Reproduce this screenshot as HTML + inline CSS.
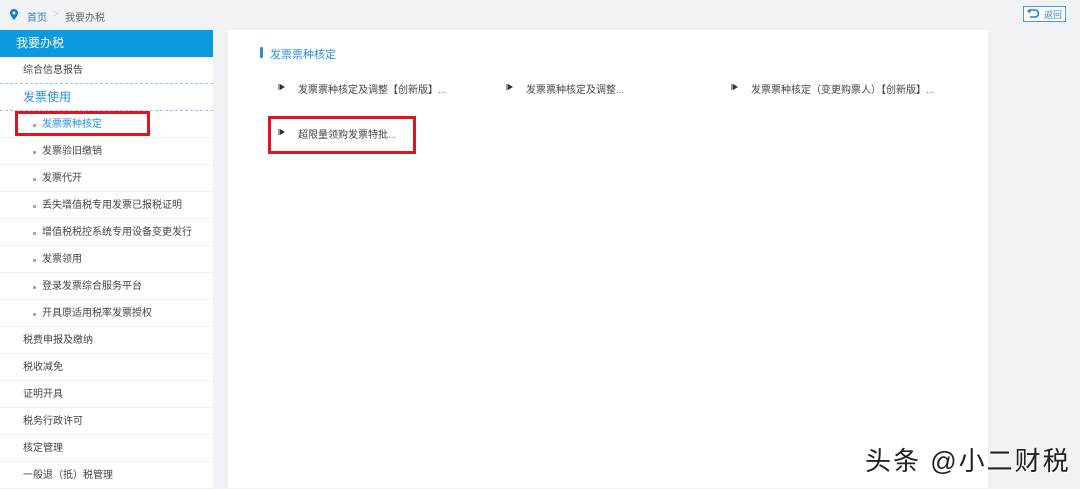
<!DOCTYPE html>
<html><head><meta charset="utf-8"><style>
*{margin:0;padding:0;box-sizing:border-box}
body{width:1080px;height:488px;background:#f0f2f5;font-family:"Liberation Sans","Noto Sans CJK SC",sans-serif;position:relative;overflow:hidden;color:#444}
.a{position:absolute;white-space:nowrap}
.side{position:absolute;left:0;top:30px;width:213px;height:458px;background:#fff}
.hd{height:27px;background:#0b99e0;color:#fff;font-size:12px;line-height:27px;padding-left:16px}
.it{height:27px;line-height:27px;font-size:10px;padding-left:23px;border-bottom:1px solid #f0f0f0}
.sub{padding-left:42px;position:relative}
.sub:before{content:"";position:absolute;left:33px;top:13px;width:3px;height:3px;background:#aaa}
.panel{position:absolute;left:228px;top:30px;width:760px;height:458px;background:#fff}
.lk{position:absolute;font-size:10px;color:#444;white-space:nowrap}
.lk:before{content:"";position:absolute;left:-18px;top:3px;border-left:5px solid #333;border-top:3px solid transparent;border-bottom:3px solid transparent}
.lk:after{content:"";position:absolute;left:-20px;top:3px;width:2px;height:6px;background:#999}
.red{position:absolute;border:3px solid #e0141e}
</style></head><body>
<svg class="a" style="left:10px;top:9px" width="8" height="11" viewBox="0 0 8 11"><path d="M4 0C1.8 0 0 1.7 0 3.9 0 6.6 4 11 4 11s4-4.4 4-7.1C8 1.7 6.2 0 4 0z" fill="#0b7fd0"/><circle cx="4" cy="4" r="1.5" fill="#fff"/></svg>
<div class="a" style="left:27px;top:9px;font-size:10px;color:#2a7fd0">首页</div>
<div class="a" style="left:53px;top:9px;font-size:10px;color:#ccc">&gt;</div>
<div class="a" style="left:65px;top:9px;font-size:10px;color:#666">我要办税</div>
<div class="a" style="left:1023px;top:6px;width:43px;height:16px;border:1px solid #4a9ad8;background:#fff"></div>
<svg class="a" style="left:1027px;top:9px" width="12" height="10" viewBox="0 0 12 10"><path d="M3 1H8a3.5 3.5 0 0 1 0 7H3" fill="none" stroke="#1a7fd0" stroke-width="1.6"/><path d="M0 1L3.5 -1.5V3.5z" fill="#1a7fd0" transform="translate(0,1)"/></svg>
<div class="a" style="left:1044px;top:8px;font-size:9px;color:#2a7fd0">返回</div>
<div class="side">
<div class="hd">我要办税</div>
<div class="it" style="border-bottom:1px dashed #9cc7e8">综合信息报告</div>
<div class="it" style="font-size:12px;color:#2a8fe0;border-bottom:1px dashed #9cc7e8">发票使用</div>
<div class="it sub" style="color:#2a8fe0">发票票种核定</div>
<div class="it sub">发票验旧缴销</div>
<div class="it sub">发票代开</div>
<div class="it sub">丢失增值税专用发票已报税证明</div>
<div class="it sub">增值税税控系统专用设备变更发行</div>
<div class="it sub">发票领用</div>
<div class="it sub">登录发票综合服务平台</div>
<div class="it sub">开具原适用税率发票授权</div>
<div class="it">税费申报及缴纳</div>
<div class="it">税收减免</div>
<div class="it">证明开具</div>
<div class="it">税务行政许可</div>
<div class="it">核定管理</div>
<div class="it">一般退（抵）税管理</div>
</div>
<div class="red" style="left:15px;top:111px;width:135px;height:25px"></div>
<div class="panel">
<div class="a" style="left:32px;top:17px;width:3px;height:11px;background:#2a8fe0;border-radius:1px"></div>
<div class="a" style="left:42px;top:16px;font-size:11px;color:#2a8fe0">发票票种核定</div>
<div class="lk" style="left:70px;top:51px">发票票种核定及调整【创新版】<span style="color:#2a7fd0">...</span></div>
<div class="lk" style="left:298px;top:51px">发票票种核定及调整<span style="color:#2a7fd0">...</span></div>
<div class="lk" style="left:523px;top:51px">发票票种核定（变更购票人）【创新版】<span style="color:#2a7fd0">...</span></div>
<div class="lk" style="left:70px;top:96px">超限量领购发票特批<span style="color:#2a7fd0">...</span></div>
</div>
<div class="red" style="left:268px;top:116px;width:148px;height:38px"></div>
<div class="a" style="left:865px;top:441px;font-size:26px;letter-spacing:2px;color:#222;text-shadow:1px 1px 0 #fff">头条 @小二财税</div>
</body></html>
